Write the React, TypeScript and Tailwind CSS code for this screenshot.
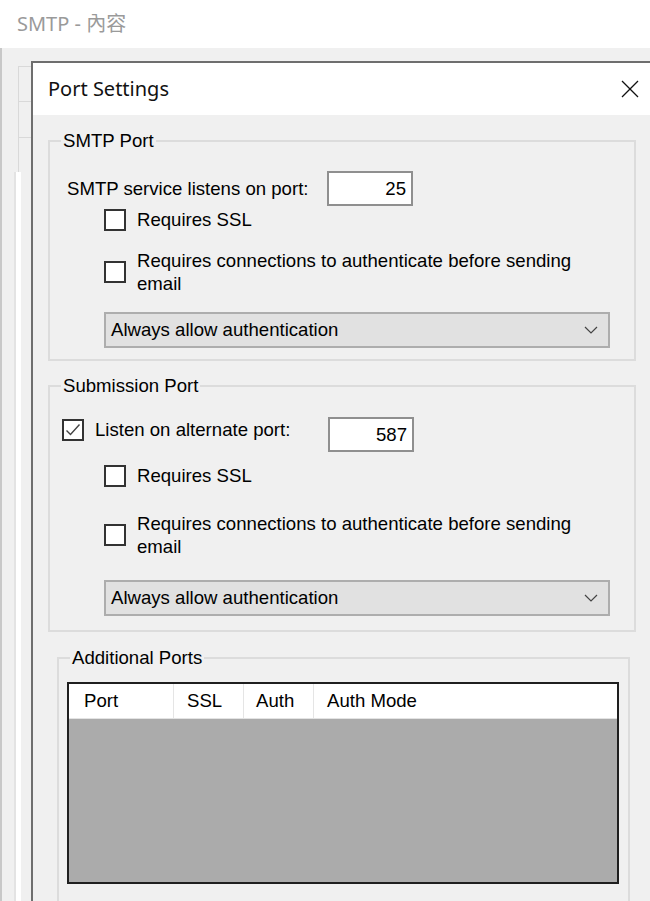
import type { ReactNode } from "react";

const Checkbox = ({ checked = false }: { checked?: boolean }) => (
  <div className="flex h-[22px] w-[22px] shrink-0 items-center justify-center border-2 border-[#333333] bg-white">
    {checked && (
      <svg width="18" height="18" viewBox="0 0 18 18">
        <polyline points="2.5,9.5 6.5,13.5 15.5,3.5" fill="none" stroke="#444444" strokeWidth="1.4" />
      </svg>
    )}
  </div>
);

const Dropdown = ({ value }: { value: string }) => (
  <div className="flex h-[36px] w-[506px] items-center justify-between border-2 border-[#adadad] bg-[#e1e1e1] pl-[5px] pr-[10px]">
    <span>{value}</span>
    <svg width="14" height="8" viewBox="0 0 14 8">
      <polyline points="1,1 7,7 13,1" fill="none" stroke="#444444" strokeWidth="1.2" />
    </svg>
  </div>
);

const PortInput = ({ value }: { value: string }) => (
  <div className="flex h-[35px] w-[86px] shrink-0 items-center justify-end border-2 border-[#8f8f8f] bg-white pr-[5px]">
    {value}
  </div>
);

const GroupBox = ({
  title,
  className,
  legendClass = "",
  children,
}: {
  title: string;
  className: string;
  legendClass?: string;
  children: ReactNode;
}) => (
  <fieldset className={`border-2 border-[#dcdcdc] ${className}`}>
    <legend className={`px-[2px] leading-[20px] ${legendClass}`}>{title}</legend>
    {children}
  </fieldset>
);

const AuthRows = ({ sslTop, authTop, dropTop }: { sslTop: string; authTop: string; dropTop: string }) => (
  <>
    <div className={`ml-[43px] flex items-center gap-[11px] ${sslTop}`}>
      <Checkbox />
      <span className="leading-[23px]">Requires SSL</span>
    </div>
    <div className={`ml-[43px] flex items-center gap-[11px] ${authTop}`}>
      <Checkbox />
      <span className="w-[450px] leading-[23px]">
        Requires connections to authenticate before sending email
      </span>
    </div>
    <div className={`ml-[43px] ${dropTop}`}>
      <Dropdown value="Always allow authentication" />
    </div>
  </>
);

const App = () => {
  return (
    <div className="relative h-[901px] w-[650px] overflow-hidden bg-[#f0f0f0] font-['Liberation_Sans',Arial,sans-serif] text-[18.6px] text-black">
      {/* background properties window */}
      <div className="flex h-full flex-col">
        <div className="flex h-[48px] items-center bg-white pl-[17px] font-['Noto_Sans','Noto_Sans_CJK_TC',sans-serif] text-[20px] text-[#9a9a9a]">
          SMTP - 內容
        </div>
        <div className="flex flex-1">
          <div className="w-[2px] bg-[#c8c8c8]" />
          <div className="flex flex-col pl-[12px] pt-[18px]">
            <div className="ml-[4px] flex w-[30px] flex-col">
              <div className="h-[35px] border-l border-t border-[#d9d9d9]" />
              <div className="h-[36px] border-l border-t border-[#d9d9d9]" />
              <div className="h-[35px] border-l border-t border-[#d9d9d9]" />
            </div>
            <div className="flex flex-1 border-l-2 border-[#e3e3e3]">
              <div className="w-[5px] bg-white" />
            </div>
          </div>
        </div>
      </div>

      {/* Port Settings dialog */}
      <div className="absolute left-[31px] top-[61px] flex h-[900px] w-[640px] flex-col border-l-2 border-t-2 border-[#6e6e6e] bg-[#f0f0f0]">
        <div className="flex h-[52px] shrink-0 items-center justify-between bg-white pl-[15px] pr-[32px]">
          <span className="font-['Noto_Sans',sans-serif] text-[20px] text-[#111111]">Port Settings</span>
          <svg width="18" height="18" viewBox="0 0 18 18">
            <line x1="1" y1="1" x2="17" y2="17" stroke="#111111" strokeWidth="1.3" />
            <line x1="17" y1="1" x2="1" y2="17" stroke="#111111" strokeWidth="1.3" />
          </svg>
        </div>

        <div className="flex flex-col">
          <GroupBox title="SMTP Port" className="ml-[15px] mt-[16px] w-[588px] px-[11px] pb-[11px]">
            <div className="ml-[6px] mt-[20px] flex items-center">
              <span className="w-[260px]">SMTP service listens on port:</span>
              <PortInput value="25" />
            </div>
            <AuthRows sslTop="mt-[2px]" authTop="mt-[18px]" dropTop="mt-[17px]" />
          </GroupBox>

          <GroupBox title="Submission Port" className="ml-[15px] mt-[15px] w-[588px] px-[11px] pb-[14px]">
            <div className="ml-[1px] mt-[21px] flex items-start">
              <div className="mt-[1px] flex items-center gap-[11px]">
                <Checkbox checked />
                <span className="w-[233px] leading-[23px]">Listen on alternate port:</span>
              </div>
              <PortInput value="587" />
            </div>
            <AuthRows sslTop="mt-[12px]" authTop="mt-[25px]" dropTop="mt-[22px]" />
          </GroupBox>

          <GroupBox
            title="Additional Ports"
            className="ml-[24px] mt-[16px] w-[573px] px-[8px] pb-[80px]"
            legendClass="ml-[3px]"
          >
            <div className="mt-[14px] flex h-[202px] w-[552px] flex-col border-2 border-[#1f1f1f] bg-[#ababab]">
              <div className="flex h-[35px] items-center border-b border-[#e3e3e3] bg-white">
                <div className="flex h-full w-[105px] items-center border-r border-[#e5e5e5] pl-[15px]">Port</div>
                <div className="flex h-full w-[70px] items-center border-r border-[#e5e5e5] pl-[13px]">SSL</div>
                <div className="flex h-full w-[70px] items-center border-r border-[#e5e5e5] pl-[12px]">Auth</div>
                <div className="flex h-full items-center pl-[13px]">Auth Mode</div>
              </div>
            </div>
          </GroupBox>
        </div>
      </div>
    </div>
  );
};

export default App;
